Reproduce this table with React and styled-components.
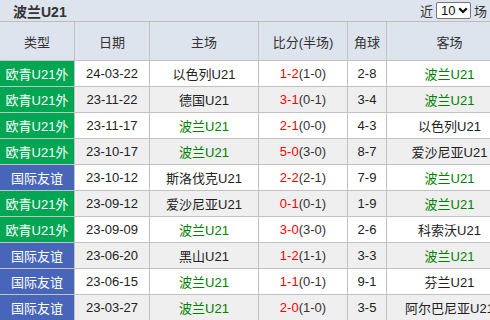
import React from "react";
import styled, { createGlobalStyle } from "styled-components";

const Global = createGlobalStyle`
  html, body { margin: 0; padding: 0; background: #fff; overflow: hidden; }
  body { font-family: "Liberation Sans", "Noto Sans CJK SC", sans-serif; }
`;

const Page = styled.div`
  width: 490px;
  height: 320px;
  overflow: hidden;
  background: #fff;
`;

const TitleBar = styled.div`
  display: flex;
  align-items: center;
  justify-content: space-between;
  height: 22px;
  background: #dde4ee;
  border-bottom: 1px solid #bdbdbd;
  padding: 0 3px 0 13px;
  width: 490px;
  box-sizing: border-box;
`;

const Title = styled.div`
  font-size: 14px;
  font-weight: bold;
  color: #333;
`;

const Picker = styled.div`
  display: flex;
  align-items: center;
  gap: 3px;
  font-size: 13px;
  color: #333;
`;

const SelectWrap = styled.div`
  position: relative;
  width: 35px;
  height: 17px;
`;

const Select = styled.select`
  appearance: none;
  -webkit-appearance: none;
  width: 35px;
  height: 17px;
  box-sizing: border-box;
  border: 1px solid #767676;
  border-radius: 2px;
  background: #fff;
  font-family: "Liberation Sans", sans-serif;
  font-size: 13px;
  color: #111;
  padding: 0 0 0 4px;
  margin: 0;
  outline: none;
`;

const Chevron = styled.svg`
  position: absolute;
  right: 3px;
  top: 5px;
  pointer-events: none;
`;

const Table = styled.div`
  width: 513px;
  display: flex;
  flex-direction: column;
`;

const cols = "75px 75px 109px 89px 39px 126px";

const Row = styled.div`
  display: grid;
  grid-template-columns: ${cols};
  height: ${(p) => (p.$head ? 39 : 26)}px;
  background: ${(p) => (p.$head ? "#dde4ee" : p.$alt ? "#efefef" : "#fff")};
`;

const Cell = styled.div`
  display: flex;
  align-items: center;
  justify-content: center;
  border-right: 1px solid #c2c2c2;
  border-bottom: 1px solid #c2c2c2;
  font-size: 13px;
  color: ${(p) => (p.$green ? "#008000" : "#222")};
  white-space: nowrap;
  overflow: hidden;
  background: ${(p) =>
    p.$kind === "eu" ? "#00a651" : p.$kind === "fr" ? "#4866b9" : "transparent"};
  ${(p) => p.$kind && "color: #fff;"}
`;

const HeadCell = styled(Cell)`
  color: #333;
`;

const Score = styled.span`
  color: #f00;
`;

const Half = styled.span`
  color: #333;
`;

const HOME = "波兰U21";

const data = [
  ["eu", "欧青U21外", "24-03-22", "以色列U21", "1-2", "1-0", "2-8", "波兰U21"],
  ["eu", "欧青U21外", "23-11-22", "德国U21", "3-1", "0-1", "3-4", "波兰U21"],
  ["eu", "欧青U21外", "23-11-17", "波兰U21", "2-1", "0-0", "4-3", "以色列U21"],
  ["eu", "欧青U21外", "23-10-17", "波兰U21", "5-0", "3-0", "8-7", "爱沙尼亚U21"],
  ["fr", "国际友谊", "23-10-12", "斯洛伐克U21", "2-2", "2-1", "7-9", "波兰U21"],
  ["eu", "欧青U21外", "23-09-12", "爱沙尼亚U21", "0-1", "0-1", "1-9", "波兰U21"],
  ["eu", "欧青U21外", "23-09-09", "波兰U21", "3-0", "3-0", "2-6", "科索沃U21"],
  ["fr", "国际友谊", "23-06-20", "黑山U21", "1-2", "1-1", "3-3", "波兰U21"],
  ["fr", "国际友谊", "23-06-15", "波兰U21", "1-1", "0-1", "9-1", "芬兰U21"],
  ["fr", "国际友谊", "23-03-27", "波兰U21", "2-0", "1-0", "3-5", "阿尔巴尼亚U21"],
];

export default function App() {
  return (
    <Page>
      <Global />
      <TitleBar>
        <Title>波兰U21</Title>
        <Picker>
          <span>近</span>
          <SelectWrap>
            <Select defaultValue="10">
              <option value="10">10</option>
              <option value="20">20</option>
            </Select>
            <Chevron width="10" height="7" viewBox="0 0 10 7">
              <path d="M1.2 1.2 L5 5 L8.8 1.2" fill="none" stroke="#111" strokeWidth="2.2" />
            </Chevron>
          </SelectWrap>
          <span>场</span>
        </Picker>
      </TitleBar>
      <Table>
        <Row $head>
          <HeadCell>类型</HeadCell>
          <HeadCell>日期</HeadCell>
          <HeadCell>主场</HeadCell>
          <HeadCell>比分(半场)</HeadCell>
          <HeadCell>角球</HeadCell>
          <HeadCell>客场</HeadCell>
        </Row>
        {data.map((r, i) => (
          <Row key={i} $alt={i % 2 === 1}>
            <Cell $kind={r[0]}>{r[1]}</Cell>
            <Cell>{r[2]}</Cell>
            <Cell $green={r[3] === HOME}>{r[3]}</Cell>
            <Cell>
              <Score>{r[4]}</Score>
              <Half>({r[5]})</Half>
            </Cell>
            <Cell>{r[6]}</Cell>
            <Cell $green={r[7] === HOME}>{r[7]}</Cell>
          </Row>
        ))}
      </Table>
    </Page>
  );
}
